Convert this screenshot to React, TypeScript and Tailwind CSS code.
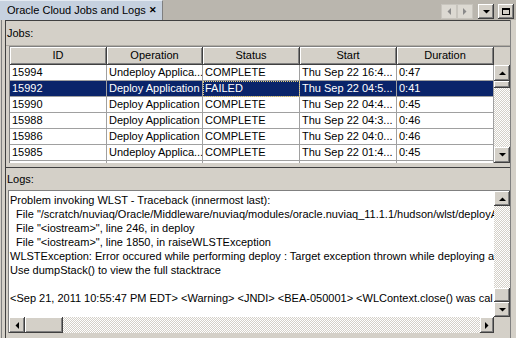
import React from 'react';

type Job = {
  id: string;
  op: string;
  status: string;
  start: string;
  dur: string;
  selected?: boolean;
};

const jobs: Job[] = [
  { id: '15994', op: 'Undeploy Applica...', status: 'COMPLETE', start: 'Thu Sep 22 16:4...', dur: '0:47' },
  { id: '15992', op: 'Deploy Application', status: 'FAILED', start: 'Thu Sep 22 04:5...', dur: '0:41', selected: true },
  { id: '15990', op: 'Deploy Application', status: 'COMPLETE', start: 'Thu Sep 22 04:4...', dur: '0:45' },
  { id: '15988', op: 'Deploy Application', status: 'COMPLETE', start: 'Thu Sep 22 04:3...', dur: '0:46' },
  { id: '15986', op: 'Deploy Application', status: 'COMPLETE', start: 'Thu Sep 22 04:0...', dur: '0:46' },
  { id: '15985', op: 'Undeploy Applica...', status: 'COMPLETE', start: 'Thu Sep 22 01:4...', dur: '0:45' },
];

const logLines = [
  'Problem invoking WLST - Traceback (innermost last):',
  '  File "/scratch/nuviaq/Oracle/Middleware/nuviaq/modules/oracle.nuviaq_11.1.1/hudson/wlst/deployA',
  '  File "<iostream>", line 246, in deploy',
  '  File "<iostream>", line 1850, in raiseWLSTException',
  'WLSTException: Error occured while performing deploy : Target exception thrown while deploying ap',
  'Use dumpStack() to view the full stacktrace',
  ' ',
  '<Sep 21, 2011 10:55:47 PM EDT> <Warning> <JNDI> <BEA-050001> <WLContext.close() was cal',
];

const raised =
  'bg-[#d4d0c8] shadow-[inset_-1px_-1px_0_#404040,inset_1px_1px_0_#ffffff,inset_-2px_-2px_0_#808080,inset_2px_2px_0_#d4d0c8]';
const track =
  'bg-[repeating-conic-gradient(#d4d0c8_0%_25%,#ffffff_0%_50%)] bg-size-[2px_2px]';

const Tri = ({ dir, color = '#000' }: { dir: 'up' | 'down' | 'left' | 'right'; color?: string }) => {
  const pts = {
    up: '0,4 7,4 3.5,0.5',
    down: '0,0 7,0 3.5,3.5',
    left: '4,0 4,7 0.5,3.5',
    right: '0,0 0,7 3.5,3.5',
  }[dir];
  const v = dir === 'up' || dir === 'down';
  return (
    <svg width={v ? 7 : 4} height={v ? 4 : 7} viewBox={v ? '0 0 7 4' : '0 0 4 7'}>
      <polygon points={pts} fill={color} />
    </svg>
  );
};

const Btn = ({ dir, className = '' }: { dir: 'up' | 'down' | 'left' | 'right'; className?: string }) => (
  <div className={`${raised} flex items-center justify-center ${className}`}>
    <Tri dir={dir} />
  </div>
);

const cols = 'grid grid-cols-[97px_96px_97px_97px_97px]';
const cell = 'border-r border-b border-[#a0a0a0] pl-[2px] leading-[15px] whitespace-nowrap overflow-hidden';

const JobsTable = () => (
  <div className="flex h-[117px] ml-[3px] border-l border-t border-[#808080]">
    <div className="flex flex-col w-[484px]">
      <div className={`${cols} h-[18px]`}>
        {['ID', 'Operation', 'Status', 'Start', 'Duration'].map((h) => (
          <div
            key={h}
            className="bg-[#d4d0c8] border-r border-b border-[#404040] shadow-[inset_1px_1px_0_#ffffff,inset_-1px_-1px_0_#808080] flex items-center justify-center"
          >
            {h}
          </div>
        ))}
      </div>
      <div className="flex-1 overflow-hidden bg-white">
        {jobs.map((j) => (
          <div
            key={j.id}
            className={`${cols} h-[16px] ${j.selected ? 'bg-[#0a246a] text-white' : ''}`}
          >
            {[j.id, j.op, j.status, j.start, j.dur].map((c, i) => (
              <div
                key={i}
                className={`${cell} ${
                  j.selected && i === 2 ? 'outline-1 outline-dotted -outline-offset-1 outline-[#e6cf7a]' : ''
                }`}
              >
                {c}
              </div>
            ))}
          </div>
        ))}
        <div className={`${cols} h-[16px]`}>
          {[0, 1, 2, 3, 4].map((i) => (
            <div key={i} className={cell} />
          ))}
        </div>
      </div>
    </div>
    <div className="w-[16px] flex flex-col">
      <div className="h-[18px] bg-[#d4d0c8]" />
      <Btn dir="up" className="h-[16px]" />
      <div className={`${raised} h-[7px]`} />
      <div className={`flex-1 ${track}`} />
      <Btn dir="down" className="h-[16px]" />
    </div>
  </div>
);

const LogsBox = () => (
  <div className="h-[143px] ml-[2px] border-t border-l border-[#808080] grid grid-cols-[1fr_16px] grid-rows-[1fr_16px]">
    <div className="bg-white overflow-hidden pl-[1px] pt-[2px]">
      {logLines.map((l, i) => (
        <div key={i} className="whitespace-pre leading-[14px] h-[14px]">
          {l}
        </div>
      ))}
    </div>
    <div className="flex flex-col">
      <Btn dir="up" className="h-[15px]" />
      <div className={`flex-1 ${track}`} />
      <div className={`${raised} h-[14px]`} />
      <Btn dir="down" className="h-[15px]" />
    </div>
    <div className="flex">
      <Btn dir="left" className="w-[16px]" />
      <div className={`${raised} w-[38px]`} />
      <div className={`flex-1 ${track}`} />
      <Btn dir="right" className="w-[14px]" />
    </div>
    <div className="bg-[#d4d0c8]" />
  </div>
);

export default function App() {
  return (
    <div className="w-[516px] h-[338px] bg-[#bab6ae] flex flex-col overflow-hidden font-['Liberation_Sans',Arial,sans-serif] text-[11px] text-black">
      <div className="h-[20px] flex shrink-0">
        <div className="w-[163px] bg-[#c6d1df] border-t border-[#e4eaf2] border-r border-r-[#7f7f7f] flex items-center pl-[7px] pr-[5px] whitespace-nowrap">
          <span className="flex-1 text-[11px]">Oracle Cloud Jobs and Logs</span>
          <span className="font-bold text-[9px] leading-none">✕</span>
        </div>
        <div className="flex-1" />
        <div className="flex items-start pt-[4px] pr-[2px]">
          <div className="w-[16px] h-[15px] bg-[#dcd9d2] border border-[#c8c5be] flex items-center justify-center">
            <Tri dir="left" color="#8a8a8a" />
          </div>
          <div className="w-[16px] h-[15px] bg-[#dcd9d2] border border-[#c8c5be] flex items-center justify-center">
            <Tri dir="right" color="#8a8a8a" />
          </div>
          <div className={`${raised} ml-[5px] w-[16px] h-[15px] flex items-center justify-center`}>
            <Tri dir="down" />
          </div>
          <div className={`${raised} ml-[4px] w-[16px] h-[15px] flex items-center justify-center`}>
            <div className="w-[8px] h-[7px] border border-black border-t-2" />
          </div>
        </div>
      </div>
      <div className="flex-1 flex bg-[#d4d0c8]">
        <div className="w-[2px] border-r border-[#808080]" />
        <div className="w-[3px]" />
        <div className="w-[505px] flex flex-col">
          <div className="border-t border-l border-[#404040] flex flex-col h-[147px]">
            <div className="h-[25px] flex items-center pl-[1px] border-b border-[#b0aca4]">Jobs:</div>
            <JobsTable />
          </div>
          <div className="border-t border-l border-[#404040] flex flex-col flex-1">
            <div className="h-[22px] flex items-center pl-[1px]">Logs:</div>
            <LogsBox />
          </div>
        </div>
        <div className="w-[1px] bg-[#808080]" />
      </div>
    </div>
  );
}
